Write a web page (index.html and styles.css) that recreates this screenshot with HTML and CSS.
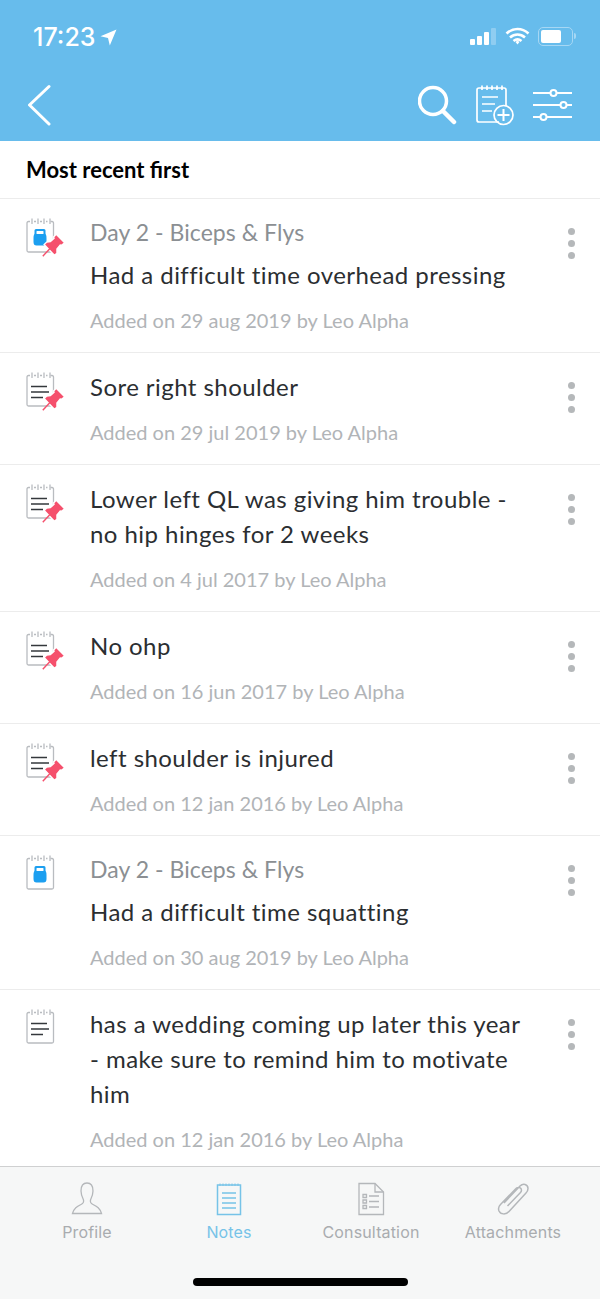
FILE: index.html
```html
<!DOCTYPE html>
<html>
<head>
  <meta charset="UTF-8">
  <meta name="viewport" content="width=device-width, initial-scale=1.0">
  <title>Notes</title>
  <link rel="stylesheet" href="styles.css">
</head>
<body>
  <!-- shared note icon parts -->
  <svg class="defs" width="0" height="0">
    <symbol id="paper" viewBox="0 0 32 38">
      <path d="M5 4.500H3.500Q2 4.500 2 6V33.500Q2 35 3.500 35H27Q28.500 35 28.500 33.500V6Q28.500 4.500 27 4.500H25.500M9 4.500H11M15 4.500H17M21 4.500H22.500" fill="#fff" stroke="#b9bcc0" stroke-width="1.300"/>
      <path d="M7 1.500V7M13 1.500V7M19 1.500V7M25 1.500V7" fill="none" stroke="#b9bcc0" stroke-width="1.300"/>
    </symbol>
    <symbol id="lines" viewBox="0 0 32 38">
      <path d="M6 15.500H22M6 21H24M6 26.500H18" fill="none" stroke="#34383c" stroke-width="1.500"/>
    </symbol>
    <symbol id="bell" viewBox="0 0 32 38">
      <path fill-rule="evenodd" d="M11 12H19Q20.500 12 20.500 13.500V16.500Q21.500 18.500 21.500 21V25Q21.500 28.500 18.500 28.500H11.500Q8.500 28.500 8.500 25V21Q8.500 18.500 9.500 16.500V13.500Q9.500 12 11 12ZM12 14Q11.500 14 11.500 14.500V16.500Q11.500 17 12 17H18Q18.500 17 18.500 16.500V14.500Q18.500 14 18 14Z" fill="#1c9ff0"/>
    </symbol>
    <symbol id="pin" viewBox="-2 -2 28 28">
      <path d="M15.500 .5L23.500 8.500L21 10.500L19.500 10L15.500 15L15.500 19.500L13.500 21L3.500 10.500L5.500 8.500L9.500 8L14 4L13.500 2.500Z" fill="#f5506c" stroke="#fff" stroke-width="3" paint-order="stroke"/>
      <path d="M8.500 15L1 23" stroke="#f5506c" stroke-width="1.500" fill="none"/>
    </symbol>
  </svg>

  <header class="top">
    <div class="status">
      <div class="clock">
        <span>17:23</span>
        <svg width="17" height="17" viewBox="0 0 17 17"><path d="M16.500 .5L9.800 16.500L8 9L.5 7.300Z" fill="#fff"/></svg>
      </div>
      <div class="status-icons">
        <div class="bars"><i class="b1"></i><i class="b2"></i><i class="b3"></i><i class="b4"></i></div>
        <svg width="25" height="18" viewBox="0 0 25 18">
          <path d="M1.500 6.500C8 .5 17 .5 23.500 6.500M5 10.500C9.500 6.500 15.500 6.500 20 10.500M8.500 14C11 12 14 12 16.500 14" fill="none" stroke="#fff" stroke-width="2.600"/>
          <path d="M10.500 15L12.500 13.500L14.500 15L12.500 17.500Z" fill="#fff"/>
        </svg>
        <div class="battery"><div class="battery-level"></div></div>
        <div class="battery-tip"></div>
      </div>
    </div>
    <nav class="nav">
      <svg class="back" width="28" height="42" viewBox="0 0 28 42"><path d="M23 2.500L3.500 21L23 40" fill="none" stroke="#fff" stroke-width="3" stroke-linecap="round" stroke-linejoin="round"/></svg>
      <div class="nav-actions">
        <svg width="40" height="40" viewBox="0 0 40 40">
          <circle cx="15" cy="16" r="13.500" fill="none" stroke="#fff" stroke-width="3.500"/>
          <path d="M25 26L36 37" stroke="#fff" stroke-width="4.500" stroke-linecap="round"/>
        </svg>
        <svg width="40" height="42" viewBox="0 0 40 42" fill="none" stroke="#fff" stroke-width="1.700">
          <path d="M24 38H4Q2 38 2 36V6Q2 4 4 4H29Q31 4 31 6V22"/>
          <path d="M7 1.500V6M12 1.500V6M17 1.500V6M22 1.500V6M27 1.500V6"/>
          <path d="M7 13H23M7 20H20M7 27H17"/>
          <circle cx="28.500" cy="31" r="9.500"/>
          <path d="M28.500 25V37M22.500 31H34.500" stroke-width="2"/>
        </svg>
        <svg width="40" height="36" viewBox="0 0 40 36" fill="none" stroke="#fff" stroke-width="2">
          <path d="M1 6H18.500M24.500 6H40M1 18H28.500M34.500 18H40M1 30H8.500M14.500 30H40"/>
          <circle cx="21.500" cy="6" r="3"/><circle cx="31.500" cy="18" r="3"/><circle cx="11.500" cy="30" r="3"/>
        </svg>
      </div>
    </nav>
  </header>

  <div class="sort">Most recent first</div>

  <main class="notes">
    <article class="note">
      <svg class="note-icon" width="40" height="40" viewBox="0 0 40 40">
        <use href="#paper" width="32" height="38"/><use href="#bell" width="32" height="38"/><use href="#pin" x="15" y="16" width="26" height="26"/>
      </svg>
      <div class="note-body">
        <div class="note-title">Day 2 - Biceps &amp; Flys</div>
        <div class="note-text">Had a difficult time overhead pressing</div>
        <div class="note-meta">Added on 29 aug 2019 by Leo Alpha</div>
      </div>
      <div class="dots"><i></i><i></i><i></i></div>
    </article>
    <article class="note">
      <svg class="note-icon" width="40" height="40" viewBox="0 0 40 40">
        <use href="#paper" width="32" height="38"/><use href="#lines" width="32" height="38"/><use href="#pin" x="15" y="16" width="26" height="26"/>
      </svg>
      <div class="note-body">
        <div class="note-text">Sore right shoulder</div>
        <div class="note-meta">Added on 29 jul 2019 by Leo Alpha</div>
      </div>
      <div class="dots"><i></i><i></i><i></i></div>
    </article>
    <article class="note">
      <svg class="note-icon" width="40" height="40" viewBox="0 0 40 40">
        <use href="#paper" width="32" height="38"/><use href="#lines" width="32" height="38"/><use href="#pin" x="15" y="16" width="26" height="26"/>
      </svg>
      <div class="note-body">
        <div class="note-text">Lower left QL was giving him trouble -<br>no hip hinges for 2 weeks</div>
        <div class="note-meta">Added on 4 jul 2017 by Leo Alpha</div>
      </div>
      <div class="dots"><i></i><i></i><i></i></div>
    </article>
    <article class="note">
      <svg class="note-icon" width="40" height="40" viewBox="0 0 40 40">
        <use href="#paper" width="32" height="38"/><use href="#lines" width="32" height="38"/><use href="#pin" x="15" y="16" width="26" height="26"/>
      </svg>
      <div class="note-body">
        <div class="note-text">No ohp</div>
        <div class="note-meta">Added on 16 jun 2017 by Leo Alpha</div>
      </div>
      <div class="dots"><i></i><i></i><i></i></div>
    </article>
    <article class="note">
      <svg class="note-icon" width="40" height="40" viewBox="0 0 40 40">
        <use href="#paper" width="32" height="38"/><use href="#lines" width="32" height="38"/><use href="#pin" x="15" y="16" width="26" height="26"/>
      </svg>
      <div class="note-body">
        <div class="note-text">left shoulder is injured</div>
        <div class="note-meta">Added on 12 jan 2016 by Leo Alpha</div>
      </div>
      <div class="dots"><i></i><i></i><i></i></div>
    </article>
    <article class="note">
      <svg class="note-icon" width="40" height="40" viewBox="0 0 40 40">
        <use href="#paper" width="32" height="38"/><use href="#bell" width="32" height="38"/>
      </svg>
      <div class="note-body">
        <div class="note-title">Day 2 - Biceps &amp; Flys</div>
        <div class="note-text">Had a difficult time squatting</div>
        <div class="note-meta">Added on 30 aug 2019 by Leo Alpha</div>
      </div>
      <div class="dots"><i></i><i></i><i></i></div>
    </article>
    <article class="note">
      <svg class="note-icon" width="40" height="40" viewBox="0 0 40 40">
        <use href="#paper" width="32" height="38"/><use href="#lines" width="32" height="38"/>
      </svg>
      <div class="note-body">
        <div class="note-text">has a wedding coming up later this year<br>- make sure to remind him to motivate<br>him</div>
        <div class="note-meta">Added on 12 jan 2016 by Leo Alpha</div>
      </div>
      <div class="dots"><i></i><i></i><i></i></div>
    </article>
  </main>

  <footer class="tabs">
    <div class="tab-row">
      <div class="tab">
        <svg width="32" height="34" viewBox="0 0 32 34" fill="none" stroke="#b4b7ba" stroke-width="1.300">
          <path d="M10 9C10 3 12.500 1 16 1S22 3 22 9C22 13 20.500 16 19.500 18C19 20 20 21.500 22 22.500C26 24.500 29 26 30.500 31.500H1.500C3 26 6 24.500 10 22.500C12 21.500 13 20 12.500 18C11.500 16 10 13 10 9Z"/>
        </svg>
        <span>Profile</span>
      </div>
      <div class="tab tab-active">
        <svg width="32" height="34" viewBox="0 0 32 34" fill="none" stroke="#76c3e8" stroke-width="1.500">
          <path d="M4.500 3H27.500V32.500H4.500Z"/>
          <path d="M7 1.500V4M10 1.500V4M13 1.500V4M16 1.500V4M19 1.500V4M22 1.500V4M25 1.500V4" stroke-width="1"/>
          <path d="M9 11H23M9 16H23M9 21H23M9 26H23"/>
        </svg>
        <span>Notes</span>
      </div>
      <div class="tab">
        <svg width="32" height="34" viewBox="0 0 32 34" fill="none" stroke="#b4b7ba" stroke-width="1.300">
          <path d="M4 1.500H20L28.500 10V32.500H4Z"/>
          <path d="M20 1.500V10H28.500"/>
          <path d="M8 12.500H11.500V15.500H8ZM8 18H11.500V21H8ZM8 23.500H11.500V26.500H8ZM14 14H24M14 19.500H24M14 25H24"/>
        </svg>
        <span>Consultation</span>
      </div>
      <div class="tab">
        <svg width="34" height="34" viewBox="0 0 34 34" fill="none" stroke="#b4b7ba" stroke-width="1.500">
          <path d="M8 21L24 4C27 1 32 2 32 6.500C32 8.500 31 10 30 11L13 29.500C10 33 4.500 32.500 3 29C2 26.500 3 24 4.500 22.500L20 6.500C22 4.500 25.500 5.500 25.500 8C25.500 9 25 10 24.500 10.500L11.500 24"/>
        </svg>
        <span>Attachments</span>
      </div>
    </div>
    <div class="home-bar"></div>
  </footer>
</body>
</html>
```

FILE: styles.css
```css
* { box-sizing: border-box; }
html, body { margin: 0; height: 100%; }
body { width: 600px; height: 1299px; display: flex; flex-direction: column; overflow: hidden; background: #fff; font-family: Lato, "Noto Sans", sans-serif; }
.defs { display: block; height: 0; }

.top { height: 141px; flex: none; background: #67bcec; color: #fff; }
.status { height: 70px; padding: 19px 24px 0 33px; display: flex; justify-content: space-between; }
.clock { display: flex; align-items: center; gap: 5px; height: 36px; font-family: Inter, sans-serif; font-size: 25px; font-weight: 500; }
.status-icons { display: flex; align-items: center; height: 34px; }
.bars { display: flex; align-items: flex-end; gap: 2px; height: 17px; margin-right: 9px; }
.bars i { width: 5px; background: #fff; border-radius: 1px; }
.b1 { height: 6px; }
.b2 { height: 9px; }
.b3 { height: 13px; }
.bars .b4 { height: 17px; background: #8fcdf1; }
.battery { width: 35px; height: 19px; margin-left: 8px; padding: 2px; border: 1px solid #a6d7f4; border-radius: 5px; }
.battery-level { width: 20px; height: 13px; background: #fff; border-radius: 2px; }
.battery-tip { width: 2px; height: 6px; margin-left: 1px; background: #a6d7f4; border-radius: 0 2px 2px 0; }

.nav { height: 71px; padding: 0 28px 0 26px; display: flex; align-items: flex-start; justify-content: space-between; }
.back { margin-top: 14px; }
.nav-actions { display: flex; align-items: center; gap: 17px; margin-top: 14px; }

.sort { height: 58px; flex: none; padding: 0 26px; display: flex; align-items: center; border-bottom: 1px solid #ececec; font-size: 22px; font-weight: 700; color: #000; }

.notes { flex: 1; min-height: 0; overflow: hidden; }
.note { display: flex; padding: 16px 0 20px 25px; border-bottom: 1px solid #ececec; }
.note-icon { flex: none; margin: 2px 25px 0 0; }
.note-body { flex: 1; }
.note-title { height: 42px; line-height: 35px; font-size: 23px; letter-spacing: .05px; color: #8b8f93; }
.note-text { line-height: 35px; font-size: 24px; letter-spacing: .45px; color: #2b2e31; }
.note-meta { margin-top: 16px; line-height: 24px; font-size: 20px; color: #b1b4b7; }
.dots { flex: none; width: 58px; padding-top: 13px; display: flex; flex-direction: column; align-items: center; gap: 5px; }
.dots i { width: 7px; height: 7px; border-radius: 50%; background: #b5b8ba; }

.tabs { height: 133px; flex: none; background: #f6f7f7; border-top: 1px solid #cfd0d1; position: relative; }
.tab-row { display: flex; padding: 15px 16px 0; }
.tab { flex: 1; display: flex; flex-direction: column; align-items: center; gap: 6px; font-family: Inter, sans-serif; font-size: 16px; letter-spacing: .15px; color: #a9acaf; }
.tab-active { color: #76c3e8; }
.home-bar { position: absolute; left: 193px; bottom: 13px; width: 215px; height: 8px; border-radius: 4px; background: #000; }
```
